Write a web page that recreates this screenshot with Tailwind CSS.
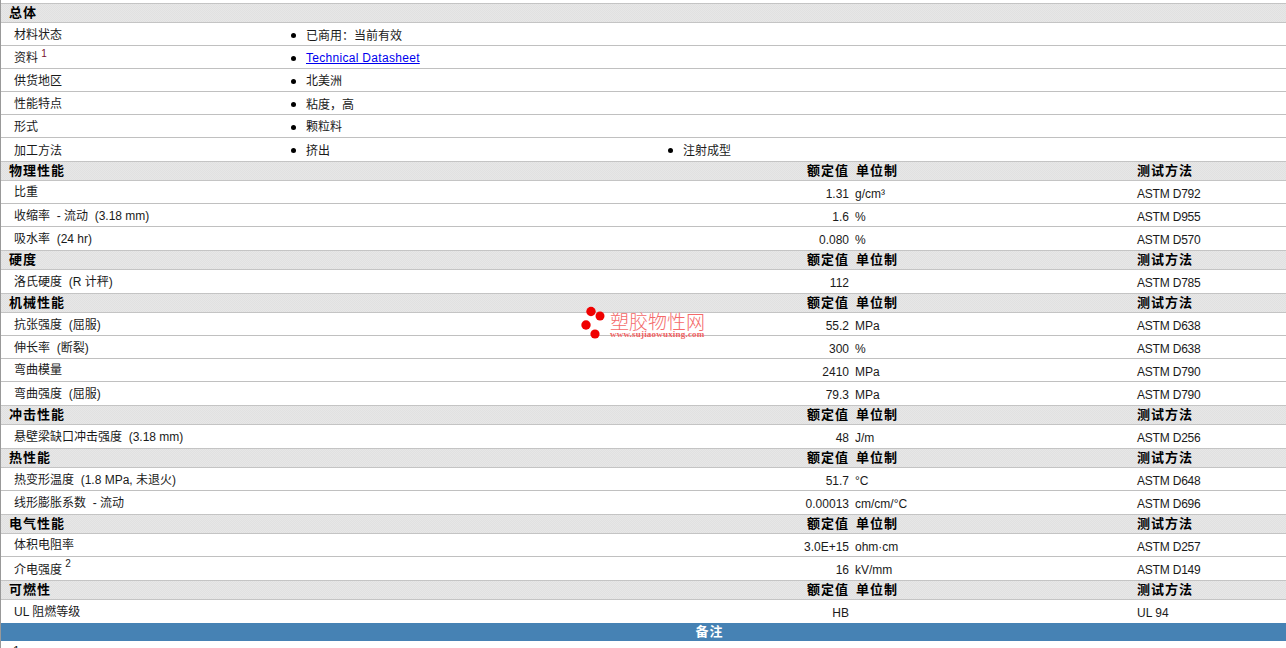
<!DOCTYPE html>
<html lang="zh-CN">
<head>
<meta charset="utf-8" />
<title>物性表</title>
<script src="https://cdn.jsdelivr.net/npm/@tailwindcss/browser@4"></script>
</head>
<body class="bg-white h-[648px] overflow-hidden font-['Liberation_Sans','Noto_Sans_CJK_SC',sans-serif] text-xs text-[#1a1a1a]">
<div class="relative pt-[3px] border-l border-[#999]">

  <!-- 总体 -->
  <div class="h-5 bg-[repeating-conic-gradient(#e1e1e1_0_25%,#e7e7e7_0_50%)] bg-[length:2px_2px] border-y border-[#c4c4c4] pl-2 text-[13px] leading-[18px] font-bold tracking-[1px] text-black">总体</div>
  <div class="h-[23px] pt-[2px] border-b border-[#c0c0c0] grid grid-cols-[277px_377px_1fr] items-center pl-[13px]">
    <span>材料状态</span>
    <span class="flex items-center gap-2.5"><i class="size-[5px] rounded-full bg-black"></i><span>已商用<span class="font-['Noto_Sans_CJK_TC']">：</span>当前有效</span></span>
  </div>
  <div class="h-[23px] pt-[2px] border-b border-[#c0c0c0] grid grid-cols-[277px_377px_1fr] items-center pl-[13px]">
    <span>资料 <sup class="text-[10px] text-[#7a1030]">1</sup></span>
    <span class="flex items-center gap-2.5"><i class="size-[5px] rounded-full bg-black"></i><a href="#" class="underline tracking-[0.3px] text-[#0000ee]">Technical Datasheet</a></span>
  </div>
  <div class="h-[23px] pt-[2px] border-b border-[#c0c0c0] grid grid-cols-[277px_377px_1fr] items-center pl-[13px]">
    <span>供货地区</span>
    <span class="flex items-center gap-2.5"><i class="size-[5px] rounded-full bg-black"></i>北美洲</span>
  </div>
  <div class="h-[23px] pt-[2px] border-b border-[#c0c0c0] grid grid-cols-[277px_377px_1fr] items-center pl-[13px]">
    <span>性能特点</span>
    <span class="flex items-center gap-2.5"><i class="size-[5px] rounded-full bg-black"></i><span>粘度<span class="font-['Noto_Sans_CJK_TC']">，</span>高</span></span>
  </div>
  <div class="h-[23px] pt-[2px] border-b border-[#c0c0c0] grid grid-cols-[277px_377px_1fr] items-center pl-[13px]">
    <span>形式</span>
    <span class="flex items-center gap-2.5"><i class="size-[5px] rounded-full bg-black"></i>颗粒料</span>
  </div>
  <div class="h-[23px] pt-[2px] grid grid-cols-[277px_377px_1fr] items-center pl-[13px]">
    <span>加工方法</span>
    <span class="flex items-center gap-2.5"><i class="size-[5px] rounded-full bg-black"></i>挤出</span>
    <span class="flex items-center gap-2.5"><i class="size-[5px] rounded-full bg-black"></i>注射成型</span>
  </div>

  <!-- 物理性能 -->
  <div class="h-5 bg-[repeating-conic-gradient(#e1e1e1_0_25%,#e7e7e7_0_50%)] bg-[length:2px_2px] border-y border-[#c4c4c4] grid grid-cols-[848px_280px_1fr] pl-2 text-[13px] leading-[18px] font-bold tracking-[1px] text-black">
    <span>物理性能</span><span class="ml-[-50px] w-[91px] flex justify-between"><span>额定值</span><span>单位制</span></span><span>测试方法</span>
  </div>
  <div class="h-[23px] border-b border-[#c0c0c0] grid grid-cols-[835px_288px_1fr] items-center pl-[13px]">
    <span class="-mt-px">比重</span><span class="mt-1 flex"><span class="w-0 flex justify-end">1.31</span><span class="ml-[6px]">g/cm³</span></span><span class="mt-1 tracking-[-0.2px]">ASTM D792</span>
  </div>
  <div class="h-[23px] border-b border-[#c0c0c0] grid grid-cols-[835px_288px_1fr] items-center pl-[13px]">
    <span class="mt-px">收缩率&nbsp; - 流动&nbsp; (3.18 mm)</span><span class="mt-1 flex"><span class="w-0 flex justify-end">1.6</span><span class="ml-[6px]">%</span></span><span class="mt-1 tracking-[-0.2px]">ASTM D955</span>
  </div>
  <div class="h-[23px] border-b border-transparent grid grid-cols-[835px_288px_1fr] items-center pl-[13px]">
    <span class="mt-px">吸水率&nbsp; (24 hr)</span><span class="mt-1 flex"><span class="w-0 flex justify-end">0.080</span><span class="ml-[6px]">%</span></span><span class="mt-1 tracking-[-0.2px]">ASTM D570</span>
  </div>

  <!-- 硬度 -->
  <div class="h-5 bg-[repeating-conic-gradient(#e1e1e1_0_25%,#e7e7e7_0_50%)] bg-[length:2px_2px] border-y border-[#c4c4c4] grid grid-cols-[848px_280px_1fr] pl-2 text-[13px] leading-[18px] font-bold tracking-[1px] text-black">
    <span>硬度</span><span class="ml-[-50px] w-[91px] flex justify-between"><span>额定值</span><span>单位制</span></span><span>测试方法</span>
  </div>
  <div class="h-[23px] border-b border-transparent grid grid-cols-[835px_288px_1fr] items-center pl-[13px]">
    <span class="mt-px">洛氏硬度&nbsp; (R 计秤)</span><span class="mt-1 flex"><span class="w-0 flex justify-end">112</span></span><span class="mt-1 tracking-[-0.2px]">ASTM D785</span>
  </div>

  <!-- 机械性能 -->
  <div class="h-5 bg-[repeating-conic-gradient(#e1e1e1_0_25%,#e7e7e7_0_50%)] bg-[length:2px_2px] border-y border-[#c4c4c4] grid grid-cols-[848px_280px_1fr] pl-2 text-[13px] leading-[18px] font-bold tracking-[1px] text-black">
    <span>机械性能</span><span class="ml-[-50px] w-[91px] flex justify-between"><span>额定值</span><span>单位制</span></span><span>测试方法</span>
  </div>
  <div class="h-[23px] border-b border-[#c0c0c0] grid grid-cols-[835px_288px_1fr] items-center pl-[13px]">
    <span class="mt-px">抗张强度&nbsp; (屈服)</span><span class="mt-1 flex"><span class="w-0 flex justify-end">55.2</span><span class="ml-[6px]">MPa</span></span><span class="mt-1 tracking-[-0.2px]">ASTM D638</span>
  </div>
  <div class="h-[23px] border-b border-[#c0c0c0] grid grid-cols-[835px_288px_1fr] items-center pl-[13px]">
    <span class="mt-px">伸长率&nbsp; (断裂)</span><span class="mt-1 flex"><span class="w-0 flex justify-end">300</span><span class="ml-[6px]">%</span></span><span class="mt-1 tracking-[-0.2px]">ASTM D638</span>
  </div>
  <div class="h-[23px] border-b border-[#c0c0c0] grid grid-cols-[835px_288px_1fr] items-center pl-[13px]">
    <span class="-mt-px">弯曲模量</span><span class="mt-1 flex"><span class="w-0 flex justify-end">2410</span><span class="ml-[6px]">MPa</span></span><span class="mt-1 tracking-[-0.2px]">ASTM D790</span>
  </div>
  <div class="h-[23px] border-b border-transparent grid grid-cols-[835px_288px_1fr] items-center pl-[13px]">
    <span class="mt-px">弯曲强度&nbsp; (屈服)</span><span class="mt-1 flex"><span class="w-0 flex justify-end">79.3</span><span class="ml-[6px]">MPa</span></span><span class="mt-1 tracking-[-0.2px]">ASTM D790</span>
  </div>

  <!-- 冲击性能 -->
  <div class="h-5 bg-[repeating-conic-gradient(#e1e1e1_0_25%,#e7e7e7_0_50%)] bg-[length:2px_2px] border-y border-[#c4c4c4] grid grid-cols-[848px_280px_1fr] pl-2 text-[13px] leading-[18px] font-bold tracking-[1px] text-black">
    <span>冲击性能</span><span class="ml-[-50px] w-[91px] flex justify-between"><span>额定值</span><span>单位制</span></span><span>测试方法</span>
  </div>
  <div class="h-[23px] border-b border-transparent grid grid-cols-[835px_288px_1fr] items-center pl-[13px]">
    <span class="mt-px">悬壁梁缺口冲击强度&nbsp; (3.18 mm)</span><span class="mt-1 flex"><span class="w-0 flex justify-end">48</span><span class="ml-[6px]">J/m</span></span><span class="mt-1 tracking-[-0.2px]">ASTM D256</span>
  </div>

  <!-- 热性能 -->
  <div class="h-5 bg-[repeating-conic-gradient(#e1e1e1_0_25%,#e7e7e7_0_50%)] bg-[length:2px_2px] border-y border-[#c4c4c4] grid grid-cols-[848px_280px_1fr] pl-2 text-[13px] leading-[18px] font-bold tracking-[1px] text-black">
    <span>热性能</span><span class="ml-[-50px] w-[91px] flex justify-between"><span>额定值</span><span>单位制</span></span><span>测试方法</span>
  </div>
  <div class="h-[23px] border-b border-[#c0c0c0] grid grid-cols-[835px_288px_1fr] items-center pl-[13px]">
    <span class="mt-px">热变形温度&nbsp; (1.8 MPa, 未退火)</span><span class="mt-1 flex"><span class="w-0 flex justify-end">51.7</span><span class="ml-[6px]">°C</span></span><span class="mt-1 tracking-[-0.2px]">ASTM D648</span>
  </div>
  <div class="h-[23px] border-b border-transparent grid grid-cols-[835px_288px_1fr] items-center pl-[13px]">
    <span class="mt-px">线形膨胀系数&nbsp; - 流动</span><span class="mt-1 flex"><span class="w-0 flex justify-end">0.00013</span><span class="ml-[6px]">cm/cm/°C</span></span><span class="mt-1 tracking-[-0.2px]">ASTM D696</span>
  </div>

  <!-- 电气性能 -->
  <div class="h-5 bg-[repeating-conic-gradient(#e1e1e1_0_25%,#e7e7e7_0_50%)] bg-[length:2px_2px] border-y border-[#c4c4c4] grid grid-cols-[848px_280px_1fr] pl-2 text-[13px] leading-[18px] font-bold tracking-[1px] text-black">
    <span>电气性能</span><span class="ml-[-50px] w-[91px] flex justify-between"><span>额定值</span><span>单位制</span></span><span>测试方法</span>
  </div>
  <div class="h-[23px] border-b border-[#c0c0c0] grid grid-cols-[835px_288px_1fr] items-center pl-[13px]">
    <span class="-mt-px">体积电阻率</span><span class="mt-1 flex"><span class="w-0 flex justify-end">3.0E+15</span><span class="ml-[6px]">ohm·cm</span></span><span class="mt-1 tracking-[-0.2px]">ASTM D257</span>
  </div>
  <div class="h-[23px] border-b border-transparent grid grid-cols-[835px_288px_1fr] items-center pl-[13px]">
    <span class="mt-1">介电强度 <sup class="-top-[7px] text-[10px]">2</sup></span><span class="mt-1 flex"><span class="w-0 flex justify-end">16</span><span class="ml-[6px]">kV/mm</span></span><span class="mt-1 tracking-[-0.2px]">ASTM D149</span>
  </div>

  <!-- 可燃性 -->
  <div class="h-5 bg-[repeating-conic-gradient(#e1e1e1_0_25%,#e7e7e7_0_50%)] bg-[length:2px_2px] border-y border-[#c4c4c4] grid grid-cols-[848px_280px_1fr] pl-2 text-[13px] leading-[18px] font-bold tracking-[1px] text-black">
    <span>可燃性</span><span class="ml-[-50px] w-[91px] flex justify-between"><span>额定值</span><span>单位制</span></span><span>测试方法</span>
  </div>
  <div class="h-[23px] border-b border-transparent grid grid-cols-[835px_288px_1fr] items-center pl-[13px]">
    <span class="mt-0.5">UL 阻燃等级</span><span class="mt-1 flex"><span class="w-0 flex justify-end">HB</span></span><span class="mt-1">UL 94</span>
  </div>

  <!-- 备注 -->
  <div class="h-[18px] bg-[#4682b4] text-center text-white text-[13px] leading-[17px] font-bold tracking-[1px] pl-[132px]">备注</div>
  <div class="pl-3 pt-[2px] leading-4">1</div>

  <!-- watermark -->
  <div class="absolute left-[579px] top-[306px] w-[130px] h-[36px]">
    <svg class="absolute left-0 top-0" width="30" height="36" viewBox="0 0 30 36" fill="#f00000">
      <circle cx="11" cy="5.5" r="4.7"/><circle cx="20" cy="10" r="4.5"/><circle cx="6" cy="19" r="4.7"/><circle cx="15" cy="28" r="4.6"/>
    </svg>
    <div class="absolute left-[30px] top-[6px] text-[19px] leading-[21px] whitespace-nowrap text-[#f46a6a] font-light">塑胶物性网</div>
    <div class="absolute left-[30px] top-[23px] text-[9px] leading-[10px] tracking-[0.2px] whitespace-nowrap text-[#f06060] font-bold font-['Liberation_Serif',serif]">www.sujiaowuxing.com</div>
  </div>
</div>
</body>
</html>
